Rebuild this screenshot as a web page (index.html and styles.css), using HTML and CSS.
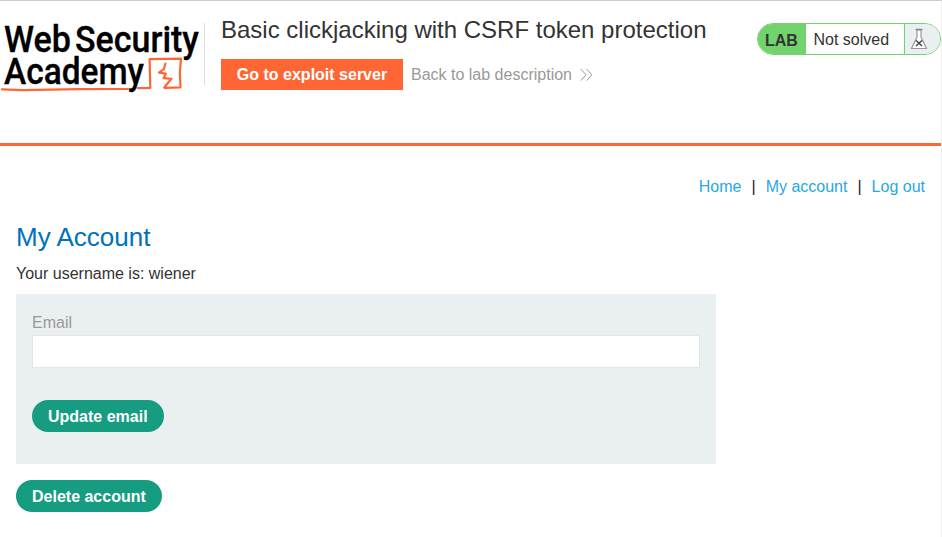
FILE: index.html
```html
<!DOCTYPE html>
<html lang="en">
<head>
<meta charset="utf-8">
<title>Basic clickjacking with CSRF token protection</title>
<link rel="stylesheet" href="styles.css">
</head>
<body>
<div class="page">
  <header class="lab-header">
    <svg class="logo" width="204" height="100" viewBox="0 1 204 100" role="img" aria-label="Web Security Academy">
      <g class="logo-text">
        <text x="4" y="51.5" textLength="67" lengthAdjust="spacingAndGlyphs">Web</text>
        <text x="75" y="51.5" textLength="124" lengthAdjust="spacingAndGlyphs">Security</text>
        <text x="4" y="84" textLength="140" lengthAdjust="spacingAndGlyphs">Academy</text>
      </g>
      <g class="logo-mark">
        <path d="M2 89.400 L22 90.200 L80 89.200 L128 89 M138 88.200 L150.300 87.900 L149.600 59.200 L181 58.600 L179.800 73 L180.500 87.400 L164.400 87.800"/>
        <path d="M165.400 63.500 L163.800 69.200 L159 72.600 L165.800 73.600 L163.600 78.200 L171.400 78.800 L164.400 87.200"/>
      </g>
    </svg>
    <div class="title-box">
      <h2 class="title">Basic clickjacking with CSRF token protection</h2>
      <div class="actions">
        <a class="exploit">Go to exploit server</a>
        <a class="back">Back to lab description
          <svg width="13" height="14" viewBox="0 0 13 14"><path d="M.8 1 6 6.800.8 12.600M6.600 1 11.800 6.800 6.600 12.600" fill="none" stroke="#999" stroke-width="1"/></svg>
        </a>
      </div>
    </div>
    <div class="status">
      <span class="status-lab">LAB</span>
      <span class="status-text">Not solved</span>
      <span class="status-icon">
        <svg width="18" height="22" viewBox="0 0 18 22"><path d="M7 2V9L1.500 20.500H16.500L11 9V2Z" fill="#fff" stroke="#999" stroke-width="1.200"/><path d="M5.500 1.500H12.500" stroke="#888" stroke-width="1.600"/><path d="M6 12.500 12 18M12 12.500 6 18" stroke="#444" stroke-width="1.500"/></svg>
      </span>
    </div>
  </header>
  <main class="content">
    <nav class="nav"><a>Home</a><span>|</span><a>My account</a><span>|</span><a>Log out</a></nav>
    <h1 class="heading">My Account</h1>
    <p class="username">Your username is: wiener</p>
    <form class="panel">
      <label class="label" for="email">Email</label>
      <input class="input" id="email" type="email">
      <button class="button" type="button">Update email</button>
    </form>
    <button class="button" type="button">Delete account</button>
  </main>
</div>
</body>
</html>
```

FILE: styles.css
```css
* { box-sizing: border-box; }
body {
  margin: 0;
  font: 16px/20px "Liberation Sans", Arial, sans-serif;
  color: #333332;
  background: #fff;
}
.page {
  height: 537px;
  border-top: 1px solid #ccc;
  border-right: 1px solid #eee;
  overflow: hidden;
}
.lab-header {
  display: flex;
  align-items: flex-start;
  height: 145px;
  border-bottom: 3px solid #ff6633;
}
.logo { display: block; flex: none; }
.logo-text {
  font: 500 37.5px Roboto, sans-serif;
  fill: #000;
  stroke: #000;
  stroke-width: 0.3;
}
.logo-mark {
  fill: none;
  stroke: #ff6633;
  stroke-width: 2.2;
  stroke-linejoin: round;
  stroke-linecap: round;
}
.title-box {
  margin-top: 22px;
  height: 62px;
  padding-left: 16px;
  border-left: 1px solid #ddd;
}
.title {
  margin: -7px 0 15px;
  font-size: 24px;
  line-height: 28px;
  font-weight: 400;
  white-space: nowrap;
}
.actions { display: flex; align-items: center; gap: 8px; }
.exploit {
  width: 182px;
  height: 31px;
  line-height: 31px;
  text-align: center;
  font-weight: 700;
  color: #fff;
  background: #ff6633;
}
.back { display: flex; align-items: center; gap: 8px; color: #999; }
.status {
  display: flex;
  width: 184px;
  height: 32px;
  margin: 22px 0 0 auto;
  border: 1px solid #72d36d;
  border-radius: 16px;
  line-height: 32px;
  overflow: hidden;
}
.status-lab {
  width: 48px;
  padding-left: 7px;
  font-weight: 700;
  line-height: 33px;
  background: #72d36d;
}
.status-text { width: 98px; padding-left: 7.5px; line-height: 31px; }
.status-icon {
  flex: 1;
  padding: 4px 0 0 5px;
  line-height: 0;
  background: #eaeff2;
  border-left: 1px solid #72d36d;
}
.content { padding: 31px 16px 0; }
.nav { display: flex; justify-content: flex-end; gap: 10px; color: #222; }
.nav a { color: #29a7df; }
.heading {
  margin: 24px 0 0;
  font-size: 26px;
  line-height: 32px;
  font-weight: 400;
  color: #0071bc;
}
.username { margin: 11px 0 10px; }
.panel {
  width: 700px;
  height: 170px;
  margin-bottom: 16px;
  padding: 19px 16px 0;
  background: #eaeff2;
}
.label { display: block; margin-bottom: 2px; color: #999; }
.input {
  display: block;
  width: 100%;
  height: 33px;
  margin-bottom: 32px;
  border: 1px solid #e3e5e7;
  background: #fff;
}
.button {
  display: block;
  height: 32px;
  padding: 1px 16px 0;
  border: 0;
  border-radius: 16px;
  font: 700 16px/32px "Liberation Sans", Arial, sans-serif;
  color: #fff;
  background: #169c80;
}
```
